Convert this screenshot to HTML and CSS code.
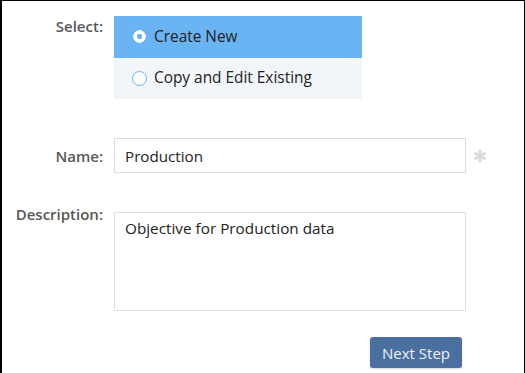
FILE: index.html
```html
<!DOCTYPE html>
<html lang="en">

<head>
    <meta charset="UTF-8">
    <meta name="viewport" content="width=device-width, initial-scale=1.0">
    <title>New Objective</title>
    <link rel="stylesheet" href="styles.css">
</head>

<body>

    <div class="frame">
        <div class="form-row row-select">
            <label class="field-label">Select:</label>
            <div class="options">
                <div class="option selected">
                    <span class="radio checked"></span>
                    <span>Create New</span>
                </div>
                <div class="option">
                    <span class="radio"></span>
                    <span>Copy and Edit Existing</span>
                </div>
            </div>
        </div>

        <div class="form-row row-name">
            <label class="field-label" for="name">Name:</label>
            <div class="field-with-req">
                <div class="input">Production</div>
                <svg class="required" width="14" height="14" viewBox="0 0 14 14">
                    <g stroke="#dcdcdc" stroke-width="3" stroke-linecap="butt">
                        <line x1="7" y1="0.5" x2="7" y2="13.5" />
                        <line x1="1.4" y1="3.75" x2="12.6" y2="10.25" />
                        <line x1="1.4" y1="10.25" x2="12.6" y2="3.75" />
                    </g>
                </svg>
            </div>
        </div>

        <div class="form-row row-desc">
            <label class="field-label desc-label" for="desc">Description:</label>
            <div class="textarea">Objective for Production data</div>
        </div>

        <div class="form-row row-actions">
            <span></span>
            <div class="actions">
                <button class="button">Next Step</button>
            </div>
        </div>
    </div>

</body>

</html>
```

FILE: styles.css
```css
body {
    margin: 0;
    font-family: "Open Sans", "Liberation Sans", sans-serif;
    font-size: 15px;
    line-height: 20px;
    color: #222;
    background-color: #fff;
}

.frame {
    box-sizing: border-box;
    height: 373px;
    border-left: 2px solid #000;
    border-right: 1px solid #000;
    border-top: 1px solid #000;
    padding-top: 15px;
}

.form-row {
    display: grid;
    grid-template-columns: 101px auto;
    column-gap: 11px;
    align-items: start;
}

.field-label {
    text-align: right;
    font-weight: 600;
    color: #585858;
}

.row-select {
    margin-bottom: 39px;
}

.options {
    display: flex;
    flex-direction: column;
    width: 248px;
}

.option {
    display: flex;
    align-items: center;
    height: 41.5px;
    padding-left: 18px;
    font-size: 15.4px;
    background-color: #f3f6f9;
}

.option.selected {
    background-color: #6ab4f3;
}

.radio {
    box-sizing: border-box;
    width: 15px;
    height: 15px;
    margin-right: 7px;
    border: 1.5px solid #6ab4f3;
    border-radius: 50%;
    background-color: #fff;
}

.radio.checked {
    border: none;
    background: radial-gradient(circle, #6ab4f3 0 2.4px, #fff 2.9px 6px, #6ab4f3 6.5px);
}

.row-name {
    align-items: center;
    margin-bottom: 39px;
}

.field-with-req {
    display: flex;
    align-items: center;
    gap: 7px;
}

.input {
    box-sizing: border-box;
    width: 352px;
    height: 35px;
    padding: 7px 10px;
    border: 1px solid #ddd;
    font-size: 15.2px;
}

.row-desc {
    margin-bottom: 26px;
}

.desc-label {
    margin-top: -8px;
}

.textarea {
    box-sizing: border-box;
    width: 352px;
    height: 99px;
    padding: 5px 10px;
    border: 1px solid #ddd;
    font-size: 15.3px;
}

.actions {
    display: flex;
    justify-content: flex-end;
    width: 352px;
    padding-right: 4px;
    box-sizing: border-box;
}

.button {
    height: 31px;
    padding: 0 12px;
    font-family: inherit;
    font-size: 15px;
    color: #eef3f9;
    background-color: #4b6f9f;
    border: none;
    border-radius: 3px;
    box-shadow: 0 1px 2px rgba(0, 0, 0, 0.15);
    cursor: pointer;
}
```
